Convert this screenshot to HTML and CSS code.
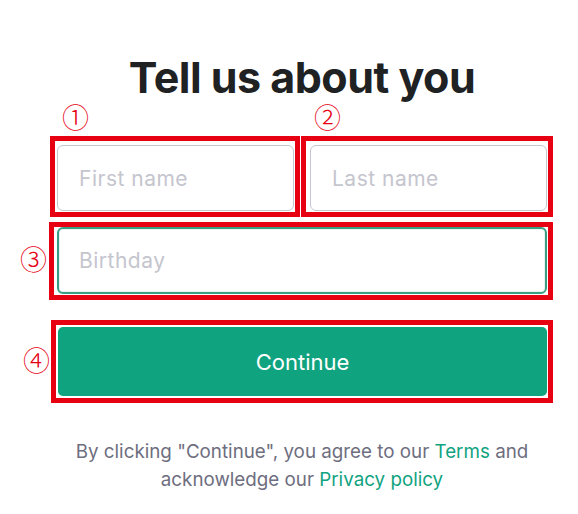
FILE: index.html
```html
<!DOCTYPE html>
<html lang="en">
<head>
<meta charset="utf-8">
<title>Tell us about you</title>
<link rel="stylesheet" href="styles.css">
</head>
<body>
<main class="auth">
  <h1 class="title">Tell us about you</h1>
  <form class="form">
    <div class="row">
      <div class="field mark mark-1">
        <span class="num num-1">①</span>
        <input class="input" type="text" placeholder="First name">
      </div>
      <div class="field mark mark-2">
        <span class="num num-2">②</span>
        <input class="input" type="text" placeholder="Last name">
      </div>
    </div>
    <div class="field mark mark-3">
      <span class="num num-3">③</span>
      <input class="input input-focus" type="text" placeholder="Birthday">
    </div>
    <div class="field mark mark-4">
      <span class="num num-4">④</span>
      <button class="continue" type="button">Continue</button>
    </div>
  </form>
  <p class="legal">By clicking "Continue", you agree to our <a href="#">Terms</a> and<br>acknowledge our <a href="#">Privacy policy</a></p>
</main>
</body>
</html>
```

FILE: styles.css
```css
html, body {
  margin: 0;
  padding: 0;
  background: #ffffff;
}

body {
  font-family: Inter, "Noto Sans", "Liberation Sans", sans-serif;
  color: #202123;
}

.auth {
  width: 490px;
  margin-left: 57px;
  padding-top: 53px;
  display: flex;
  flex-direction: column;
}

.title {
  margin: 0;
  font-size: 43px;
  line-height: 48px;
  font-weight: 700;
  text-align: center;
  letter-spacing: -0.5px;
  color: #202123;
}

.form {
  margin-top: 44px;
  display: flex;
  flex-direction: column;
}

.row {
  display: flex;
  gap: 16px;
}

.row .field {
  flex: 1;
}

.field {
  position: relative;
  display: flex;
}

.input {
  box-sizing: border-box;
  width: 100%;
  height: 66px;
  border: 1px solid #c2c8d0;
  border-radius: 6px;
  padding: 0 21px;
  font-family: inherit;
  font-size: 21px;
  letter-spacing: 0.5px;
  color: #2d333a;
  background: #fff;
  outline: none;
}

.input::placeholder {
  color: #c5c5ce;
}

.input-focus {
  height: 67px;
  border: 2px solid #3a9e86;
  box-shadow: inset 0 0 0 1px #e7f4f0;
  padding-left: 20px;
}

.mark-3 {
  margin-top: 16px;
}

.mark-4 {
  margin-top: 33px;
}

.continue {
  width: 100%;
  height: 69px;
  margin-left: 1px;
  border: none;
  border-radius: 5px;
  background: #10a37f;
  color: #ffffff;
  font-family: inherit;
  font-size: 22px;
  font-weight: 400;
  cursor: pointer;
}

.legal {
  margin: 42px 0 0;
  font-size: 18.8px;
  line-height: 28px;
  text-align: center;
  color: #6e6e80;
}

.legal a {
  color: #10a37f;
  text-decoration: none;
}

/* red annotation overlays */
.mark::after {
  content: "";
  position: absolute;
  border: 5px solid #e60012;
  pointer-events: none;
}

.mark-1::after { left: -7px; right: -6px; top: -9px; bottom: -6px; }
.mark-2::after { left: -9px; right: -6px; top: -9px; bottom: -6px; }
.mark-3::after { left: -8px; right: -6px; top: -5px; bottom: -6px; }
.mark-4::after { left: -6px; right: -6px; top: -7px; bottom: -7px; }

.num {
  position: absolute;
  font-family: "DejaVu Sans", "Noto Sans CJK JP", sans-serif;
  font-weight: 300;
  font-size: 27px;
  line-height: 24px;
  color: #e60012;
}

.num-1 { left: 5px; top: -38px; }
.num-2 { left: 4px; top: -38px; }
.num-3 { left: -37px; top: 22px; }
.num-4 { left: -34px; top: 23px; }
```
